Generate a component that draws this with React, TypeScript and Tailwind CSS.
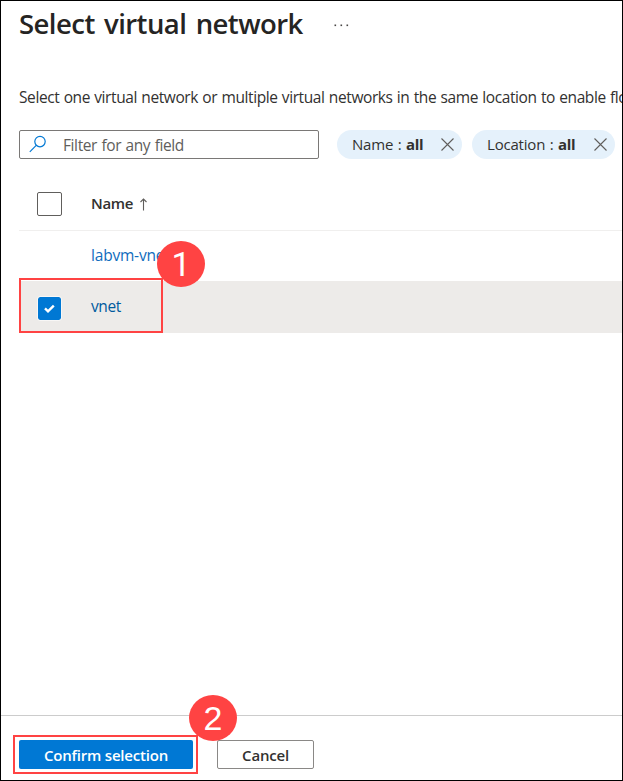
import React from "react";

function CloseIcon() {
  return (
    <svg width="13" height="13" viewBox="0 0 13 13" fill="none" stroke="#605e5c" strokeWidth="1.1">
      <path d="M0.5 0.5 12.5 12.5M12.5 0.5 0.5 12.5" />
    </svg>
  );
}

function Pill({ label, className }: { label: string; className: string }) {
  return (
    <div className={`flex h-[29px] items-center justify-between rounded-full bg-[#e5f1fb] pl-[15px] pr-2 ${className}`}>
      <span className="whitespace-pre text-[15px] leading-[29px] tracking-[-0.2px] [word-spacing:0.8px]">
        {label} : <b className="font-bold tracking-[-0.3px]">all</b>
      </span>
      <CloseIcon />
    </div>
  );
}

function Step({ n, className }: { n: number; className: string }) {
  return (
    <div
      className={`absolute flex h-[46px] w-12 items-center justify-center rounded-[50%] bg-[#ff4343] leading-none tracking-normal text-white ${className}`}
    >
      <span>{n}</span>
    </div>
  );
}

export default function App() {
  return (
    <div className="flex h-[781px] w-[623px] flex-col overflow-hidden border border-black bg-white font-['Open_Sans','Noto_Sans',sans-serif] text-[#323130]">
      <header className="flex h-[46px] shrink-0 items-center pl-[18px]">
        <h1 className="w-[315px] whitespace-nowrap text-[27.5px] font-semibold leading-[46px] tracking-[-0.55px] text-[#252423] [word-spacing:2.7px]">
          Select virtual network
        </h1>
        <svg className="mt-0.5" width="15" height="3" viewBox="0 0 15 3" fill="#484644">
          <rect x="0.5" y="0.5" width="1.6" height="1.6" />
          <rect x="6.5" y="0.5" width="1.6" height="1.6" />
          <rect x="12.5" y="0.5" width="1.6" height="1.6" />
        </svg>
      </header>

      <main className="flex min-h-0 flex-1 flex-col pl-[18px]">
        <p className="mt-[38px] h-6 whitespace-nowrap text-[15.5px] leading-6 tracking-[-0.4px] [word-spacing:0.65px]">
          Select one virtual network or multiple virtual networks in the same location to enable flow
        </p>

        <div className="mt-[21px] flex shrink-0">
          <div className="flex h-[29px] w-[300px] items-center rounded-[2px] border border-[#7a7876] pl-[9px]">
            <svg className="-mt-0.5" width="18" height="18" viewBox="0 0 18 18" fill="none" stroke="#0078d4" strokeWidth="1.2">
              <circle cx="11" cy="6.6" r="5.2" />
              <path d="M7.2 10.4 0.8 16.8" />
            </svg>
            <span className="ml-4 mt-0.5 text-[15.5px] tracking-[-0.4px] text-[#605e5c] [word-spacing:0.8px]">
              Filter for any field
            </span>
          </div>
          <Pill label="Name" className="ml-[18px] w-[125px]" />
          <Pill label="Location" className="ml-[10px] w-[143px]" />
        </div>

        <div className="mt-[19px] flex h-[53px] shrink-0 items-center border-b border-[#f0efee] pl-[18px]">
          <span className="h-6 w-[25px] rounded-[2px] border border-[#605e5c]" />
          <span className="-mt-0.5 ml-[29px] text-[15px] font-semibold tracking-[-0.3px]">Name</span>
          <svg className="ml-[6px]" width="9" height="13" viewBox="0 0 9 13" fill="none" stroke="#605e5c" strokeWidth="1.1">
            <path d="M4.5 12.5V1M1.5 4 4.5 1 7.5 4" />
          </svg>
        </div>

        <div className="relative flex h-[50px] shrink-0 items-center pl-[72px]">
          <a className="text-[15.5px] tracking-[-0.2px] text-[#0f6cbd]">labvm-vnet</a>
          <Step n={1} className="left-[138px] top-[10px] z-10 font-['Roboto',sans-serif] text-[34px]" />
        </div>

        <div className="relative flex h-[52px] shrink-0 items-center bg-[#edebe9] pl-[19px]">
          <span className="mt-0.5 flex h-[23px] w-[23px] items-center justify-center rounded-[2px] bg-[#0078d4] outline outline-1 outline-[#f8f7f6]">
            <svg width="11" height="9" viewBox="0 0 11 9" fill="none" stroke="white" strokeWidth="2.4">
              <path d="M1 4.4 4 7.3 9.8 1.6" />
            </svg>
          </span>
          <a className="ml-[30px] text-[15.5px] tracking-[-0.4px] text-[#005a9e]">vnet</a>
          <div className="absolute -top-[3px] left-0 h-[55px] w-36 border-2 border-[#ff4343]" />
        </div>
      </main>

      <footer className="relative flex h-[65px] shrink-0 items-start border-t border-[#cccccc] pl-[18px] pt-6">
        <button className="relative h-[29px] w-[174px] rounded-[2px] bg-[#0078d4] pt-px text-[15px] font-semibold leading-[29px] tracking-[-0.2px] text-white">
          Confirm selection
          <span className="absolute -left-[6px] -top-[5px] h-[39px] w-[185px] border-2 border-[#ff4343]" />
        </button>
        <button className="ml-6 h-[29px] w-[97px] rounded-[2px] border border-[#8a8886] text-[15px] font-semibold leading-[28px] tracking-[-0.2px]">
          Cancel
        </button>
        <Step n={2} className="-top-[21px] left-[188px] font-['Liberation_Sans',sans-serif] text-[34px]" />
      </footer>
    </div>
  );
}
